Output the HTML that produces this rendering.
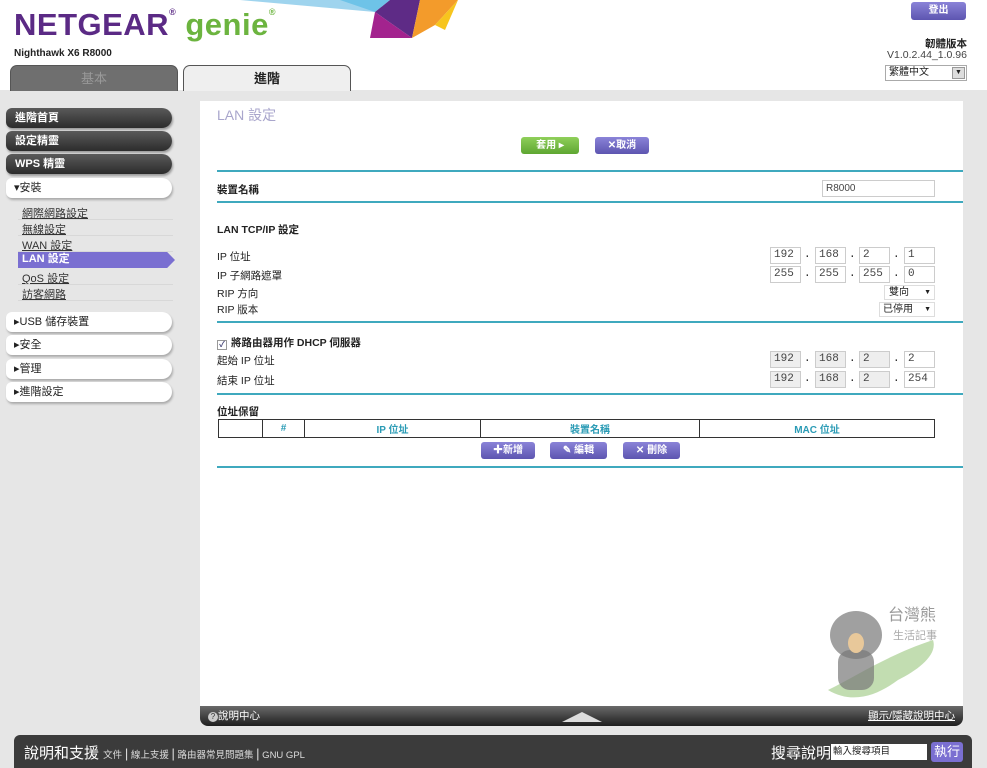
<!DOCTYPE html>
<html><head><meta charset="utf-8"><style>
*{margin:0;padding:0;box-sizing:border-box}
body{width:987px;height:768px;position:relative;overflow:hidden;background:#e6e6e6;font-family:"Liberation Sans","Noto Sans CJK TC",sans-serif;font-size:11px;color:#222}
.a{position:absolute}
.hdr{left:0;top:0;width:987px;height:90px;background:#fff}
.tab{top:65px;height:26px;border-radius:7px 7px 0 0;text-align:center;font-size:13px;line-height:25px;border:1px solid #555;border-bottom:none}
.dk{left:6px;width:166px;height:20px;border-radius:6px 10px 10px 6px;background:linear-gradient(#5a5a5a,#2c2c2c);color:#fff;font-weight:bold;font-size:11px;line-height:20px;padding-left:9px;box-shadow:1px 2px 2px #999}
.wt{left:6px;width:166px;height:20px;border-radius:6px 10px 10px 6px;background:#fff;font-size:11px;line-height:20px;padding-left:8px;box-shadow:1px 2px 2px #aaa}
.sub{left:22px;font-size:11px;text-decoration:underline;color:#333}
.sl{left:18px;width:155px;height:1px;background:#d8d8d8}
.line{left:217px;width:746px;height:2px;background:#3fa9be}
.lb{left:217px;font-size:10.5px}
.ip{height:17px;border:1px solid #ccc;background:#fff;font-family:"Liberation Mono",monospace;font-size:11px;line-height:15px;padding-left:3px;color:#444}
.gr{background:#eee}
.dot{font-size:11px;font-family:"Liberation Mono",monospace}
.btn{height:17px;border-radius:3px;color:#fff;font-size:10px;font-weight:bold;text-align:center;line-height:17px;background:linear-gradient(#8a83d8,#5d55b0)}
</style></head><body>
<div class="a hdr"></div>
<svg class="a" style="left:240px;top:0" width="230" height="42">
<polygon points="0,0 130,0 135,12" fill="#9fd4ee"/>
<polygon points="100,0 150,0 135,12" fill="#6ec3e8"/>
<polygon points="135,12 150,0 180,0 172,38" fill="#5e2b86"/>
<polygon points="135,12 172,38 130,38" fill="#a3238e"/>
<polygon points="180,0 218,0 195,25 172,38" fill="#f39b2b"/>
<polygon points="195,25 218,0 205,30" fill="#f7c51e"/>
</svg>
<div class="a" style="left:14px;top:7px;font-size:31px;font-weight:900;color:#5b2a85;letter-spacing:0.5px">NETGEAR<span style="font-size:9px;vertical-align:top">®</span> <span style="color:#6cb43f;font-weight:bold">genie</span><span style="font-size:9px;color:#6cb43f;vertical-align:top">®</span></div>
<div class="a" style="left:14px;top:48px;font-size:10px;font-weight:bold">Nighthawk X6 R8000</div>
<div class="a tab" style="left:10px;width:168px;background:#6f6f6f;color:#999">基本</div>
<div class="a tab" style="left:183px;width:168px;background:#efefef;font-weight:bold">進階</div>
<div class="a btn" style="left:911px;top:2px;width:55px;height:18px;line-height:18px">登出</div>
<div class="a" style="right:20px;top:36px;font-size:10.5px;font-weight:bold">韌體版本</div>
<div class="a" style="right:20px;top:49px;font-size:10.5px;color:#444">V1.0.2.44_1.0.96</div>
<div class="a" style="left:885px;top:65px;width:82px;height:16px;border:1px solid #aaa;background:#fff;font-size:10px;padding-left:3px;line-height:14px">繁體中文<span class="a" style="right:1px;top:1px;width:13px;height:12px;background:#ddd;border:1px solid #999;font-size:7px;text-align:center;line-height:10px">▼</span></div>

<div class="a dk" style="top:108px">進階首頁</div>
<div class="a dk" style="top:131px">設定精靈</div>
<div class="a dk" style="top:154px">WPS 精靈</div>
<div class="a wt" style="top:178px">▾安裝</div>
<div class="a sub" style="top:205px">網際網路設定</div><div class="a sl" style="top:219px"></div>
<div class="a sub" style="top:221px">無線設定</div><div class="a sl" style="top:235px"></div>
<div class="a sub" style="top:237px">WAN 設定</div><div class="a sl" style="top:251px"></div>
<div class="a" style="left:18px;top:252px;width:157px;height:16px;background:#7a6fd1;clip-path:polygon(0 0,95% 0,100% 50%,95% 100%,0 100%);color:#fff;font-weight:bold;padding-left:4px;line-height:15px">LAN 設定</div>
<div class="a sub" style="top:270px">QoS 設定</div><div class="a sl" style="top:284px"></div>
<div class="a sub" style="top:286px">訪客網路</div><div class="a sl" style="top:300px"></div>
<div class="a wt" style="top:312px">▸USB 儲存裝置</div>
<div class="a wt" style="top:335px">▸安全</div>
<div class="a wt" style="top:359px">▸管理</div>
<div class="a wt" style="top:382px">▸進階設定</div>

<div class="a" style="left:200px;top:101px;width:763px;height:605px;background:#fff"></div>
<div class="a" style="left:217px;top:105px;font-size:14px;color:#a9a6cc">LAN 設定</div>
<div class="a btn" style="left:521px;top:137px;width:58px;background:linear-gradient(#8fcf5a,#5ea631)">套用 ▸</div>
<div class="a btn" style="left:595px;top:137px;width:54px">✕取消</div>
<div class="a line" style="top:170px"></div>
<div class="a lb" style="top:182px;font-weight:bold">裝置名稱</div>
<div class="a ip" style="left:822px;top:180px;width:113px;font-family:'Liberation Sans';font-size:10px">R8000</div>
<div class="a line" style="top:201px"></div>
<div class="a lb" style="top:222px;font-weight:bold">LAN TCP/IP 設定</div>
<div class="a lb" style="top:249px">IP 位址</div>
<div class="a lb" style="top:268px">IP 子網路遮罩</div>
<div class="a lb" style="top:286px">RIP 方向</div>
<div class="a lb" style="top:302px">RIP 版本</div>
<div class="a ip" style="left:770px;top:247px;width:31px">192</div><span class="a dot" style="left:804px;top:249px">.</span>
<div class="a ip" style="left:815px;top:247px;width:31px">168</div><span class="a dot" style="left:849px;top:249px">.</span>
<div class="a ip" style="left:859px;top:247px;width:31px">2</div><span class="a dot" style="left:893px;top:249px">.</span>
<div class="a ip" style="left:904px;top:247px;width:31px">1</div>
<div class="a ip" style="left:770px;top:266px;width:31px">255</div><span class="a dot" style="left:804px;top:268px">.</span>
<div class="a ip" style="left:815px;top:266px;width:31px">255</div><span class="a dot" style="left:849px;top:268px">.</span>
<div class="a ip" style="left:859px;top:266px;width:31px">255</div><span class="a dot" style="left:893px;top:268px">.</span>
<div class="a ip" style="left:904px;top:266px;width:31px">0</div>
<div class="a" style="left:884px;top:285px;width:51px;height:15px;border:1px solid #ddd;font-size:10px;padding-left:4px;line-height:13px">雙向<span style="float:right;margin-right:3px;font-size:7px">▼</span></div>
<div class="a" style="left:879px;top:302px;width:56px;height:15px;border:1px solid #ddd;font-size:10px;padding-left:3px;line-height:13px">已停用<span style="float:right;margin-right:3px;font-size:7px">▼</span></div>
<div class="a line" style="top:321px"></div>
<div class="a lb" style="top:335px;font-weight:bold"><span style="display:inline-block;width:10px;height:10px;border:1px solid #999;font-size:8px;line-height:8px;text-align:center;color:#447;margin-right:4px;vertical-align:-1px">✓</span>將路由器用作 DHCP 伺服器</div>
<div class="a lb" style="top:353px">起始 IP 位址</div>
<div class="a lb" style="top:373px">結束 IP 位址</div>
<div class="a ip gr" style="left:770px;top:351px;width:31px">192</div><span class="a dot" style="left:804px;top:353px">.</span>
<div class="a ip gr" style="left:815px;top:351px;width:31px">168</div><span class="a dot" style="left:849px;top:353px">.</span>
<div class="a ip gr" style="left:859px;top:351px;width:31px">2</div><span class="a dot" style="left:893px;top:353px">.</span>
<div class="a ip" style="left:904px;top:351px;width:31px">2</div>
<div class="a ip gr" style="left:770px;top:371px;width:31px">192</div><span class="a dot" style="left:804px;top:373px">.</span>
<div class="a ip gr" style="left:815px;top:371px;width:31px">168</div><span class="a dot" style="left:849px;top:373px">.</span>
<div class="a ip gr" style="left:859px;top:371px;width:31px">2</div><span class="a dot" style="left:893px;top:373px">.</span>
<div class="a ip" style="left:904px;top:371px;width:31px">254</div>
<div class="a line" style="top:393px"></div>
<div class="a lb" style="top:404px;font-weight:bold">位址保留</div>
<table class="a" style="left:218px;top:419px;width:717px;height:19px;border-collapse:collapse;font-size:10px;font-weight:bold;color:#2a9bb5;text-align:center">
<tr><td style="border:1px solid #333;width:44px"></td><td style="border:1px solid #333;width:42px">#</td><td style="border:1px solid #333;width:176px">IP 位址</td><td style="border:1px solid #333;width:219px">裝置名稱</td><td style="border:1px solid #333">MAC 位址</td></tr></table>
<div class="a btn" style="left:481px;top:442px;width:54px">✚新增</div>
<div class="a btn" style="left:550px;top:442px;width:57px">✎ 編輯</div>
<div class="a btn" style="left:623px;top:442px;width:57px">✕ 刪除</div>
<div class="a line" style="top:466px"></div>

<svg class="a" style="left:818px;top:595px" width="140" height="120">
<path d="M10,95 C40,80 70,60 115,45 C120,60 100,75 80,85 C60,100 35,110 10,95Z" fill="#a8cf90" opacity=".7"/>
<ellipse cx="38" cy="40" rx="26" ry="24" fill="#777" opacity=".7"/>
<rect x="20" y="55" width="36" height="40" rx="12" fill="#777" opacity=".7"/>
<ellipse cx="38" cy="48" rx="8" ry="10" fill="#e8c89a"/>
<text x="70" y="25" font-size="16" fill="#999" font-family="Noto Sans CJK TC">台灣熊</text>
<text x="75" y="44" font-size="11" fill="#aaa" font-family="Noto Sans CJK TC">生活記事</text>
</svg>

<div class="a" style="left:200px;top:706px;width:763px;height:20px;background:linear-gradient(#6a6a6a,#1e1e1e);border-radius:0 0 8px 8px;color:#fff;font-size:10.5px;line-height:20px;padding-left:8px"><span style="display:inline-block;width:10px;height:10px;border-radius:50%;background:#ccc;color:#333;font-size:8px;text-align:center;line-height:10px">?</span>說明中心<span style="float:right;margin-right:8px;text-decoration:underline">顯示/隱藏說明中心</span></div>
<div class="a" style="left:562px;top:712px;width:0;height:0;border-left:20px solid transparent;border-right:20px solid transparent;border-bottom:10px solid #ddd"></div>
<div class="a" style="left:14px;top:735px;width:958px;height:33px;background:#3b3b3b;border-radius:6px 6px 0 0"></div>
<div class="a" style="left:24px;top:742px;color:#fff;font-size:15px">說明和支援 <span style="font-size:9.5px;color:#ddd">文件 <b style="font-size:13px;font-weight:normal">|</b> 線上支援 <b style="font-size:13px;font-weight:normal">|</b> 路由器常見問題集 <b style="font-size:13px;font-weight:normal">|</b> GNU GPL</span></div>
<div class="a" style="left:771px;top:742px;color:#fff;font-size:15px">搜尋說明</div>
<div class="a" style="left:831px;top:744px;width:96px;height:16px;background:#fff;font-size:9.5px;padding-left:2px;line-height:16px">輸入搜尋項目</div>
<div class="a btn" style="left:931px;top:742px;width:32px;height:20px;line-height:20px;font-size:13px;font-weight:normal;background:#7a6fd1">執行</div>
</body></html>
